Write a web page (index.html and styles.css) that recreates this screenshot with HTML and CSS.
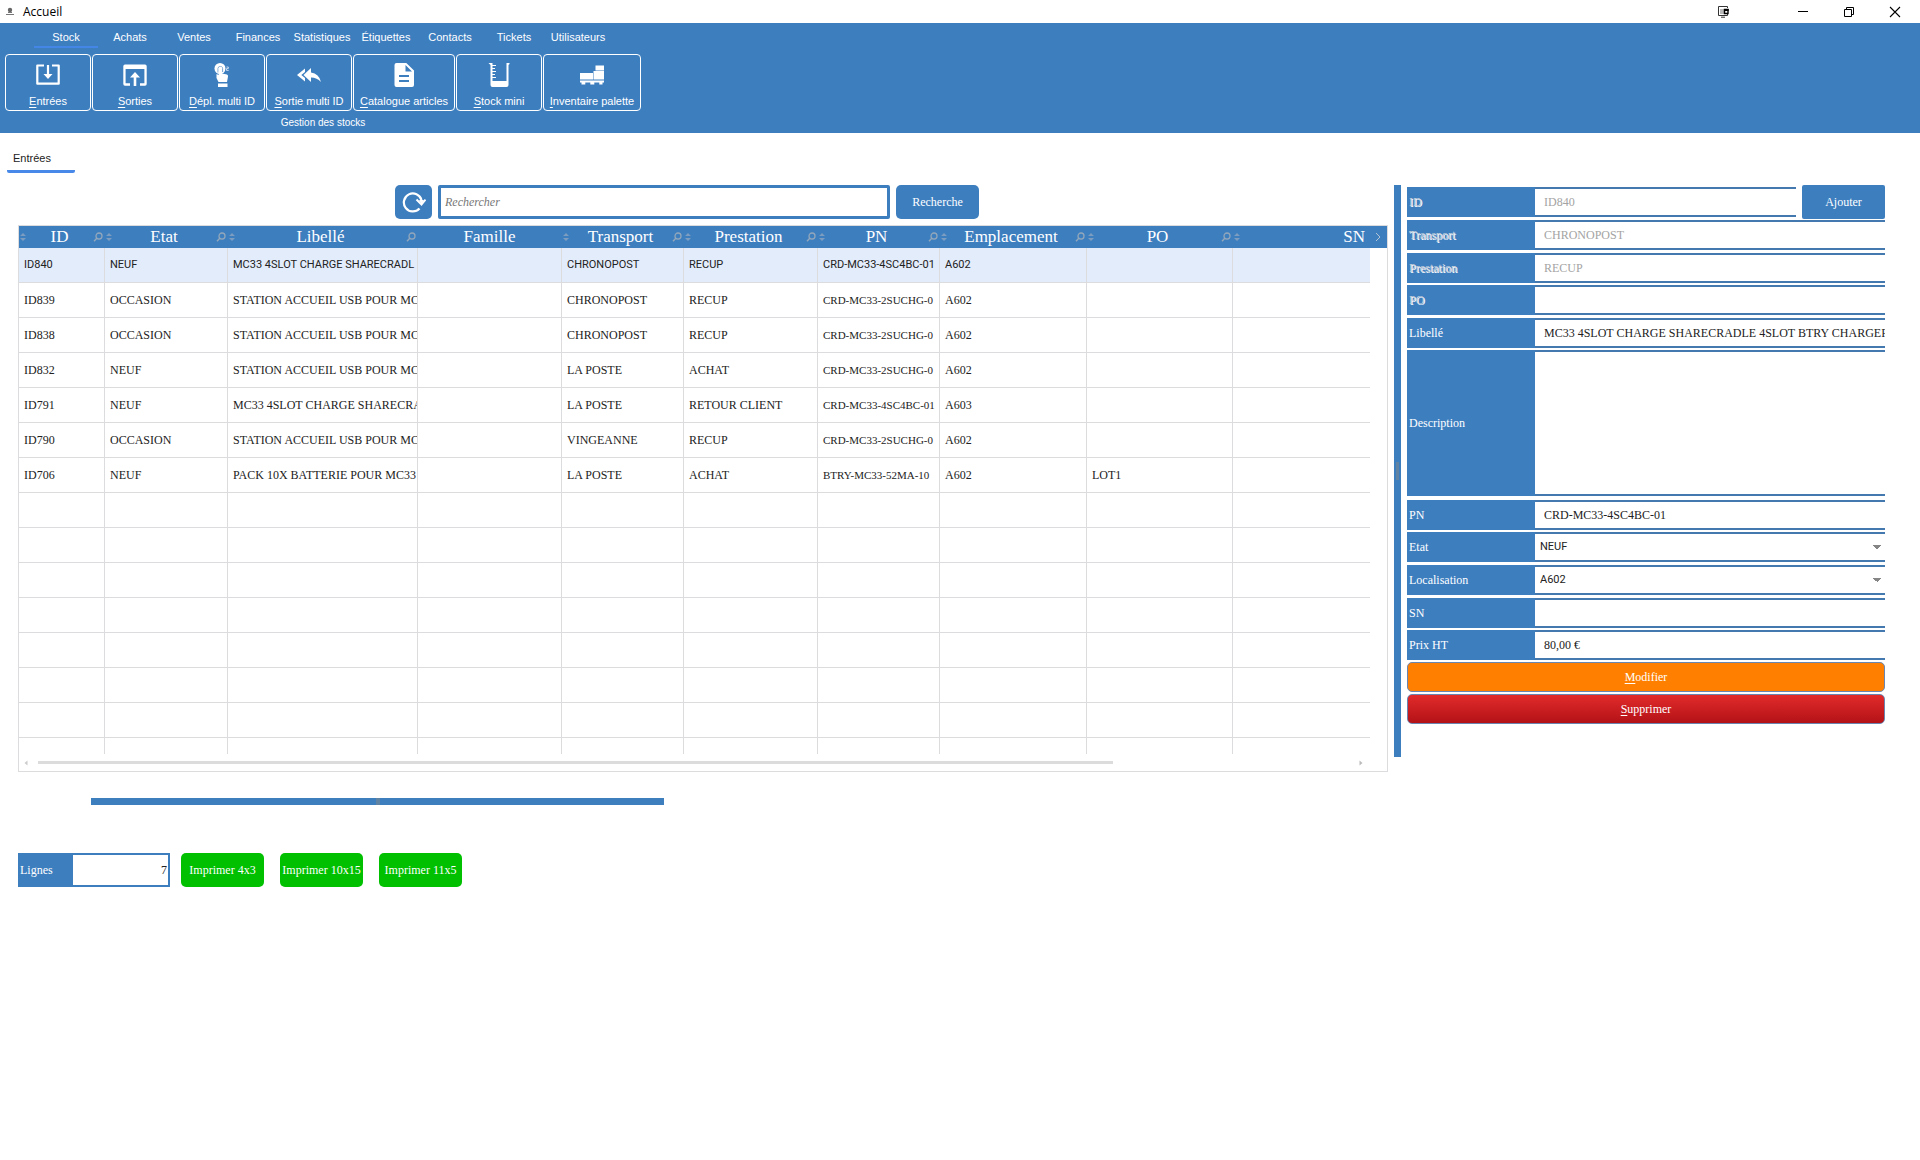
FILE: index.html
```html
<!DOCTYPE html>
<html lang="fr">
<head>
<meta charset="utf-8">
<title>Accueil</title>
<link rel="stylesheet" href="styles.css">
</head>
<body>
<svg class="sprite" aria-hidden="true">
  <symbol id="sort" viewBox="0 0 6 8"><path d="M0 3L3 0L6 3ZM0 5L3 8L6 5Z" fill="currentColor"/></symbol>
  <symbol id="loupe" viewBox="0 0 10 10"><circle cx="6" cy="4" r="3" fill="none" stroke="currentColor" stroke-width="1.3"/><path d="M4 6L1 9.2" stroke="currentColor" stroke-width="1.4"/></symbol>
</svg>

<header class="titlebar">
  <svg class="app-icon" viewBox="0 0 10 10"><circle cx="5" cy="3" r="2.2" fill="#666"/><path d="M3 5.5h4M1 7.5h8" stroke="#777"/></svg>
  <h1 class="title">Accueil</h1>
  <div class="window-controls">
    <button class="window-button" aria-label="Affichage"><svg viewBox="0 0 12 12"><path d="M10.500 2V.5h-9v9h9V8M4 11.200h4" fill="none" stroke="#333"/><path d="M4 3v5M6 3v5" stroke="#777"/><path d="M7.500 3.500h3.500v4h-3.500z" fill="#fff" stroke="#000" stroke-width="1.4"/><path d="M7 4h4.600" stroke="#000" stroke-width="2"/></svg></button>
    <button class="window-button window-button--first" aria-label="Réduire"><svg viewBox="0 0 12 12"><path d="M1 5.500h10" stroke="#000"/></svg></button>
    <button class="window-button" aria-label="Restaurer"><svg viewBox="0 0 12 12"><path d="M1.500 3.500h7v7h-7zM3.500 3.500v-2h7v7h-2" fill="none" stroke="#000"/></svg></button>
    <button class="window-button" aria-label="Fermer"><svg viewBox="0 0 12 12"><path d="M1 1L11 11M11 1L1 11" stroke="#000" stroke-width="1.100"/></svg></button>
  </div>
</header>

<div class="ribbon">
  <nav class="menu">
    <a class="menu-item menu-item--active" href="#">Stock</a>
    <a class="menu-item" href="#">Achats</a>
    <a class="menu-item" href="#">Ventes</a>
    <a class="menu-item" href="#">Finances</a>
    <a class="menu-item" href="#">Statistiques</a>
    <a class="menu-item" href="#">Étiquettes</a>
    <a class="menu-item" href="#">Contacts</a>
    <a class="menu-item" href="#">Tickets</a>
    <a class="menu-item" href="#">Utilisateurs</a>
  </nav>
  <div class="group">
    <div class="tools">
      <button class="tool"><svg viewBox="0 0 24 24"><path d="M8 2.500H1.300V20.700H22.700V2.500H16" fill="none" stroke="#fff" stroke-width="2.200" stroke-linejoin="round"/><path d="M10.900 2h2.200v9H16.500L12 16L7.500 11h3.400z" fill="#fff"/></svg><span><u>E</u>ntrées</span></button>
      <button class="tool"><svg viewBox="0 0 24 24"><path d="M2 1.500h20a1.700 1.700 0 0 1 1.700 1.700V21a1.700 1.700 0 0 1-1.700 1.700h-5v-2.500h4.400V6H2.600v14.200H7v2.500H2A1.700 1.700 0 0 1 .3 21V3.200A1.700 1.700 0 0 1 2 1.500z" fill="#fff"/><path d="M10.700 23v-8.500H7L12 9l5 5.500h-3.700V23z" fill="#fff"/></svg><span><u>S</u>orties</span></button>
      <button class="tool"><svg viewBox="0 0 24 24"><circle cx="10" cy="5.500" r="5.500" fill="#fff"/><path d="M8 9.500V5.500q0-2 2.300-2t2.300 2V9" fill="none" stroke="#3d7ebf" stroke-width=".7"/><path d="M8.700 4.500q1.700-1.500 3.300 0V10.500l5 1q1.200.4 1 2L17 19H8.500L6.500 15v-4l2.200 1z" fill="#fff"/><path d="M8 20.500h9.500V24H8z" fill="#fff"/><path d="M16.500 4h1.800v1.600h-1.800v1.800h2.200" fill="none" stroke="#fff" stroke-width=".7"/></svg><span><u>D</u>épl. multi ID</span></button>
      <button class="tool"><svg viewBox="0 0 24 24"><path d="M8 9V5.500L0 12l8 6.500V15l-3.700-3zM14 9.500V5L6.500 12l7.500 7v-4.500q6 0 10 4.500Q22 10.500 14 9.500z" fill="#fff"/></svg><span><u>S</u>ortie multi ID</span></button>
      <button class="tool tool--wide"><svg viewBox="0 0 24 24"><path d="M4.500 0h9.800L22 7.500V22a2 2 0 0 1-2 2H4.500a2 2 0 0 1-2-2V2a2 2 0 0 1 2-2zM13.500 2v6.500H20zM7 12v2h10v-2zM7 17v2h10v-2z" fill="#fff" fill-rule="evenodd"/></svg><span><u>C</u>atalogue articles</span></button>
      <button class="tool"><svg viewBox="0 0 24 24"><path d="M1.500 0H5.500V18H19.500V0H22.500V1L21.500 2V22q0 2-2 2H5.500q-2 0-2-2V2z" fill="#fff"/><path d="M5 2.500h4M5 5.500h3M5 8.500h4M5 11.500h3M5 14.500h4" stroke="#fff" stroke-width="1.200"/></svg><span><u>S</u>tock mini</span></button>
      <button class="tool tool--large"><svg viewBox="0 0 24 24"><path d="M15.500 2.500H24v5h-8.500zM13.500 8H24v8.500H13.500zM0 10h13v6.500H0zM0 17.500h24v2h-1.500v2h-3.200v-2h-5v2h-4v-2h-5v2H1.500v-2H0z" fill="#fff"/></svg><span><u>I</u>nventaire palette</span></button>
    </div>
    <div class="group-name">Gestion des stocks</div>
  </div>
</div>

<nav class="tabs"><a class="tab" href="#">Entrées</a></nav>

<main class="workspace">
  <section class="list">
    <form class="search">
      <button class="refresh" type="button" aria-label="Actualiser"><svg viewBox="0 0 24 24"><path d="M17.500 18.500A9 9 0 1 1 19.500 10" fill="none" stroke="#fff" stroke-width="2.200"/><path d="M14.500 9.500L19.500 14.500L23.500 9.500" fill="none" stroke="#fff" stroke-width="2"/><path d="M17 10h5l-2.500 4z" fill="#fff"/></svg></button>
      <input class="search-input" type="text" placeholder="Rechercher" aria-label="Rechercher">
      <button class="search-button" type="button">Recherche</button>
    </form>

    <div class="grid">
      <table class="table">
        <colgroup><col class="c-id"><col class="c-etat"><col class="c-libelle"><col class="c-famille"><col class="c-transport"><col class="c-prestation"><col class="c-pn"><col class="c-emplacement"><col class="c-po"><col><col class="c-gutter"></colgroup>
        <thead>
          <tr>
            <th><div class="head"><svg class="sort"><use href="#sort"/></svg><span>ID</span><svg class="loupe"><use href="#loupe"/></svg></div></th>
            <th><div class="head"><svg class="sort"><use href="#sort"/></svg><span>Etat</span><svg class="loupe"><use href="#loupe"/></svg></div></th>
            <th><div class="head"><svg class="sort"><use href="#sort"/></svg><span>Libellé</span><svg class="loupe"><use href="#loupe"/></svg></div></th>
            <th><div class="head"><span>Famille</span></div></th>
            <th><div class="head"><svg class="sort"><use href="#sort"/></svg><span>Transport</span><svg class="loupe"><use href="#loupe"/></svg></div></th>
            <th><div class="head"><svg class="sort"><use href="#sort"/></svg><span>Prestation</span><svg class="loupe"><use href="#loupe"/></svg></div></th>
            <th><div class="head"><svg class="sort"><use href="#sort"/></svg><span>PN</span><svg class="loupe"><use href="#loupe"/></svg></div></th>
            <th><div class="head"><svg class="sort"><use href="#sort"/></svg><span>Emplacement</span><svg class="loupe"><use href="#loupe"/></svg></div></th>
            <th><div class="head"><svg class="sort"><use href="#sort"/></svg><span>PO</span><svg class="loupe"><use href="#loupe"/></svg></div></th>
            <th><div class="head head--end"><svg class="sort"><use href="#sort"/></svg><span>SN</span></div></th>
            <th><div class="head"><svg class="next" viewBox="0 0 8 10"><path d="M2 1L6 5L2 9" fill="none" stroke="currentColor"/></svg></div></th>
          </tr>
        </thead>
        <tbody>
          <tr class="selected"><td>ID840</td><td>NEUF</td><td>MC33 4SLOT CHARGE SHARECRADL</td><td></td><td>CHRONOPOST</td><td>RECUP</td><td>CRD-MC33-4SC4BC-01</td><td>A602</td><td></td><td></td><td></td></tr>
          <tr><td>ID839</td><td>OCCASION</td><td>STATION ACCUEIL USB POUR MC</td><td></td><td>CHRONOPOST</td><td>RECUP</td><td class="pn">CRD-MC33-2SUCHG-0</td><td>A602</td><td></td><td></td><td></td></tr>
          <tr><td>ID838</td><td>OCCASION</td><td>STATION ACCUEIL USB POUR MC</td><td></td><td>CHRONOPOST</td><td>RECUP</td><td class="pn">CRD-MC33-2SUCHG-0</td><td>A602</td><td></td><td></td><td></td></tr>
          <tr><td>ID832</td><td>NEUF</td><td>STATION ACCUEIL USB POUR MC</td><td></td><td>LA POSTE</td><td>ACHAT</td><td class="pn">CRD-MC33-2SUCHG-0</td><td>A602</td><td></td><td></td><td></td></tr>
          <tr><td>ID791</td><td>NEUF</td><td>MC33 4SLOT CHARGE SHARECRA</td><td></td><td>LA POSTE</td><td>RETOUR CLIENT</td><td class="pn">CRD-MC33-4SC4BC-01</td><td>A603</td><td></td><td></td><td></td></tr>
          <tr><td>ID790</td><td>OCCASION</td><td>STATION ACCUEIL USB POUR MC</td><td></td><td>VINGEANNE</td><td>RECUP</td><td class="pn">CRD-MC33-2SUCHG-0</td><td>A602</td><td></td><td></td><td></td></tr>
          <tr><td>ID706</td><td>NEUF</td><td>PACK 10X BATTERIE POUR MC33 5</td><td></td><td>LA POSTE</td><td>ACHAT</td><td class="pn">BTRY-MC33-52MA-10</td><td>A602</td><td>LOT1</td><td></td><td></td></tr>
          <tr><td></td><td></td><td></td><td></td><td></td><td></td><td></td><td></td><td></td><td></td><td></td></tr>
          <tr><td></td><td></td><td></td><td></td><td></td><td></td><td></td><td></td><td></td><td></td><td></td></tr>
          <tr><td></td><td></td><td></td><td></td><td></td><td></td><td></td><td></td><td></td><td></td><td></td></tr>
          <tr><td></td><td></td><td></td><td></td><td></td><td></td><td></td><td></td><td></td><td></td><td></td></tr>
          <tr><td></td><td></td><td></td><td></td><td></td><td></td><td></td><td></td><td></td><td></td><td></td></tr>
          <tr><td></td><td></td><td></td><td></td><td></td><td></td><td></td><td></td><td></td><td></td><td></td></tr>
          <tr><td></td><td></td><td></td><td></td><td></td><td></td><td></td><td></td><td></td><td></td><td></td></tr>
          <tr class="partial"><td></td><td></td><td></td><td></td><td></td><td></td><td></td><td></td><td></td><td></td><td></td></tr>
        </tbody>
      </table>
      <div class="scrollbar">
        <svg class="arrow" viewBox="0 0 4 6"><path d="M3.500 .5L.5 3L3.500 5.500z" fill="#ccc"/></svg>
        <div class="track"><div class="thumb"></div></div>
        <svg class="arrow" viewBox="0 0 4 6"><path d="M.5 .5L3.500 3L.5 5.500z" fill="#bbb"/></svg>
      </div>
    </div>
  </section>

  <div class="splitter splitter--vertical"><span class="grip"></span></div>

  <form class="details">
    <div class="first">
      <div class="field"><label class="label label--off" for="f-id">ID</label><input class="control" id="f-id" value="ID840" disabled></div>
      <button class="add" type="button">Ajouter</button>
    </div>
    <div class="field"><label class="label label--off" for="f-transport">Transport</label><input class="control" id="f-transport" value="CHRONOPOST" disabled></div>
    <div class="field field--spaced"><label class="label label--off" for="f-prestation">Prestation</label><input class="control" id="f-prestation" value="RECUP" disabled></div>
    <div class="field"><label class="label label--off" for="f-po">PO</label><input class="control" id="f-po" disabled></div>
    <div class="field field--spaced"><label class="label" for="f-libelle">Libellé</label><input class="control" id="f-libelle" value="MC33 4SLOT CHARGE SHARECRADLE 4SLOT BTRY CHARGER"></div>
    <div class="field field--tall"><label class="label" for="f-description">Description</label><textarea class="control" id="f-description"></textarea></div>
    <div class="field"><label class="label" for="f-pn">PN</label><input class="control" id="f-pn" value="CRD-MC33-4SC4BC-01"></div>
    <div class="field"><label class="label" for="f-etat">Etat</label><select class="control control--select" id="f-etat"><option>NEUF</option><option>OCCASION</option></select></div>
    <div class="field field--spaced"><label class="label" for="f-localisation">Localisation</label><select class="control control--select" id="f-localisation"><option>A602</option><option>A603</option></select></div>
    <div class="field field--spaced"><label class="label" for="f-sn">SN</label><input class="control" id="f-sn"></div>
    <div class="field"><label class="label" for="f-prix">Prix HT</label><input class="control" id="f-prix" value="80,00 €"></div>
    <button class="action action--edit" type="button"><span><u>M</u>odifier</span></button>
    <button class="action action--delete" type="button"><span><u>S</u>upprimer</span></button>
  </form>
</main>

<footer class="footer">
  <div class="splitter splitter--horizontal"><span class="grip grip--flat"></span></div>
  <div class="print">
    <div class="count"><label class="count-label" for="f-lignes">Lignes</label><input class="count-value" id="f-lignes" value="7"></div>
    <div class="print-buttons">
      <button class="print-button">Imprimer 4x3</button>
      <button class="print-button">Imprimer 10x15</button>
      <button class="print-button">Imprimer 11x5</button>
    </div>
  </div>
</footer>
</body>
</html>
```
FILE: styles.css
```css
:root {
  --blue: #3d7ebf;
  --edge: #4479b0;
  --line: #dcdcde;
  --serif: "Palatino Linotype", "Book Antiqua", "Liberation Serif", serif;
  --sans: "Liberation Sans", sans-serif;
  --narrow: Roboto, "Liberation Sans", sans-serif;
}

* { box-sizing: border-box; }

body {
  margin: 0;
  background: #fff;
  color: #222;
  font: 12px/16px var(--serif);
}

button, input, select, textarea {
  margin: 0;
  padding: 0;
  border: 0;
  font: inherit;
  color: inherit;
}

a { color: inherit; text-decoration: none; }
svg { display: block; flex: none; }
u { text-underline-offset: 2px; }
.sprite { display: none; }

/* Window title bar */
.titlebar {
  display: flex;
  align-items: center;
  height: 23px;
  padding-left: 5px;
}
.app-icon { width: 10px; height: 10px; margin-right: 8px; }
.title { margin: 0; font: 12px/16px "Open Sans", sans-serif; color: #000; }
.window-controls { display: flex; margin-left: auto; padding-right: 2px; }
.window-button {
  display: grid;
  place-items: center;
  width: 46px;
  height: 22px;
  background: none;
}
.window-button--first { margin-left: 34px; }
.window-button svg { width: 12px; height: 12px; }

/* Ribbon */
.ribbon {
  height: 110px;
  background: var(--blue);
  color: #fff;
  font: 11px/14px var(--sans);
}
.menu { display: flex; height: 31px; padding: 0 0 6px 34px; }
.menu-item {
  width: 64px;
  padding: 7px 0 2px;
  text-align: center;
  white-space: nowrap;
  border-bottom: 2px solid transparent;
}
.menu-item--active { border-color: #4386e6; }
.group { width: max-content; padding-left: 5px; }
.tools { display: flex; gap: 1px; }
.tool {
  display: flex;
  flex-direction: column;
  align-items: center;
  gap: 7px;
  width: 86px;
  height: 57px;
  padding-top: 8px;
  border: 1px solid #fff;
  border-radius: 4px;
  background: none;
  white-space: nowrap;
}
.tool--wide { width: 102px; }
.tool--large { width: 98px; }
.tool svg { width: 24px; height: 24px; }
.group-name { padding-top: 5px; font-size: 10px; text-align: center; }

/* Page tabs */
.tabs { display: flex; padding: 18px 7px 12px; }
.tab {
  width: 68px;
  padding: 0 6px 5px;
  border-bottom: 3px solid #4888e8;
  border-radius: 2px;
  font: 11px/14px var(--sans);
}

/* List and details */
.workspace {
  display: flex;
  align-items: flex-start;
  gap: 6px;
  padding: 0 35px 0 18px;
}
.list { flex: 1; min-width: 0; }
.search { display: flex; justify-content: center; gap: 6px; padding: 0 32px 6px 0; }
.refresh, .search-button, .add {
  height: 34px;
  border-radius: 5px;
  background: var(--blue);
  color: #fff;
}
.refresh { display: grid; place-items: center; width: 37px; }
.refresh svg { width: 24px; height: 24px; }
.search-input { width: 452px; padding: 0 4px; border: 3px solid var(--blue); border-radius: 2px; }
.search-input::placeholder { color: #777; font-style: italic; }
.search-button { width: 83px; }

.grid { border: 1px solid var(--line); }
.table { width: 100%; border-collapse: separate; border-spacing: 0; table-layout: fixed; }
.c-id { width: 86px; }
.c-etat { width: 123px; }
.c-libelle { width: 190px; }
.c-famille { width: 144px; }
.c-transport { width: 122px; }
.c-prestation { width: 134px; }
.c-pn { width: 122px; }
.c-emplacement { width: 147px; }
.c-po { width: 146px; }
.c-gutter { width: 17px; }
th { padding: 0; background: var(--blue); color: #fff; font: 17px/22px var(--serif); }
.head { display: flex; align-items: center; height: 22px; padding: 0 2px 0 1px; }
.head span { flex: 1; text-align: center; }
.head--end span { padding-right: 3px; text-align: right; }
.sort { width: 6px; height: 8px; color: #7c9dbf; }
.loupe { width: 10px; height: 10px; color: #93a7bb; }
.next { width: 8px; height: 10px; margin: 0 auto; color: #b5c4d4; }
td {
  height: 35px;
  padding: 0 0 0 5px;
  border: solid var(--line);
  border-width: 0 1px 1px 0;
  white-space: nowrap;
  overflow: hidden;
}
td:nth-last-child(2) { border-right: 0; }
td:last-child { border: 0; background: #fff; }
.pn { font-size: 11px; }
.selected { background: #e3ecfb; font-family: var(--narrow); font-size: 11px; }
.partial td { height: 16px; border-bottom: 0; }
.scrollbar { display: flex; align-items: center; height: 17px; padding: 0 24px 0 5px; }
.arrow { width: 4px; height: 6px; }
.track { flex: 1; padding: 0 10px; }
.thumb { width: 82%; height: 3px; background: #dcdcdc; }

.splitter { display: flex; align-items: center; justify-content: center; background: var(--blue); }
.splitter--vertical { width: 7px; height: 572px; }
.splitter--horizontal { width: 573px; height: 7px; margin-left: 73px; }
.grip { width: 3px; height: 18px; background: #6082a3; }
.grip--flat { width: 4px; height: 7px; }

.details { display: flex; flex-direction: column; gap: 2px; width: 478px; }
.first { display: flex; align-items: center; gap: 6px; height: 34px; margin-bottom: -1px; }
.first .field { flex: 1; }
.add { width: 83px; border-radius: 2px; }
.field { display: flex; height: 30px; }
.field--spaced { margin-top: 1px; }
.field--tall { height: 146px; margin-bottom: 2px; }
.label {
  display: flex;
  align-items: center;
  flex: none;
  width: 128px;
  padding-left: 2px;
  background: var(--blue);
  color: #fff;
}
.label--off { color: #ccd3dc; text-shadow: 1px 1px #fff; }
.control {
  flex: 1;
  min-width: 0;
  padding: 0 0 0 9px;
  border: solid var(--edge);
  border-width: 2px 0;
  border-radius: 0;
  background: #fff;
  resize: none;
}
.control:disabled { color: #a3a3a3; }
.control--select {
  appearance: none;
  padding-left: 5px;
  font: 11px/16px var(--narrow);
  background: conic-gradient(from -45deg at 50% 100%, #858585 90deg, transparent 0) right 4px center / 8px 4px no-repeat;
}
.action { height: 30px; border: 1px solid #6a86b0; border-radius: 5px; color: #fff; }
.action--edit { background: #ff8000; }
.action--delete { background: linear-gradient(#e22b2b, #b31217); }

/* Bottom bar */
.footer { padding: 26px 18px 0; }
.print { display: flex; gap: 11px; padding-top: 48px; }
.count { display: flex; width: 152px; height: 34px; border: 2px solid var(--blue); }
.count-label { display: flex; align-items: center; width: 53px; background: var(--blue); color: #fff; }
.count-value { flex: 1; min-width: 0; padding-right: 1px; text-align: right; }
.print-buttons { display: flex; gap: 16px; }
.print-button { width: 83px; height: 34px; border-radius: 5px; background: #00c000; color: #fff; white-space: nowrap; }
```
